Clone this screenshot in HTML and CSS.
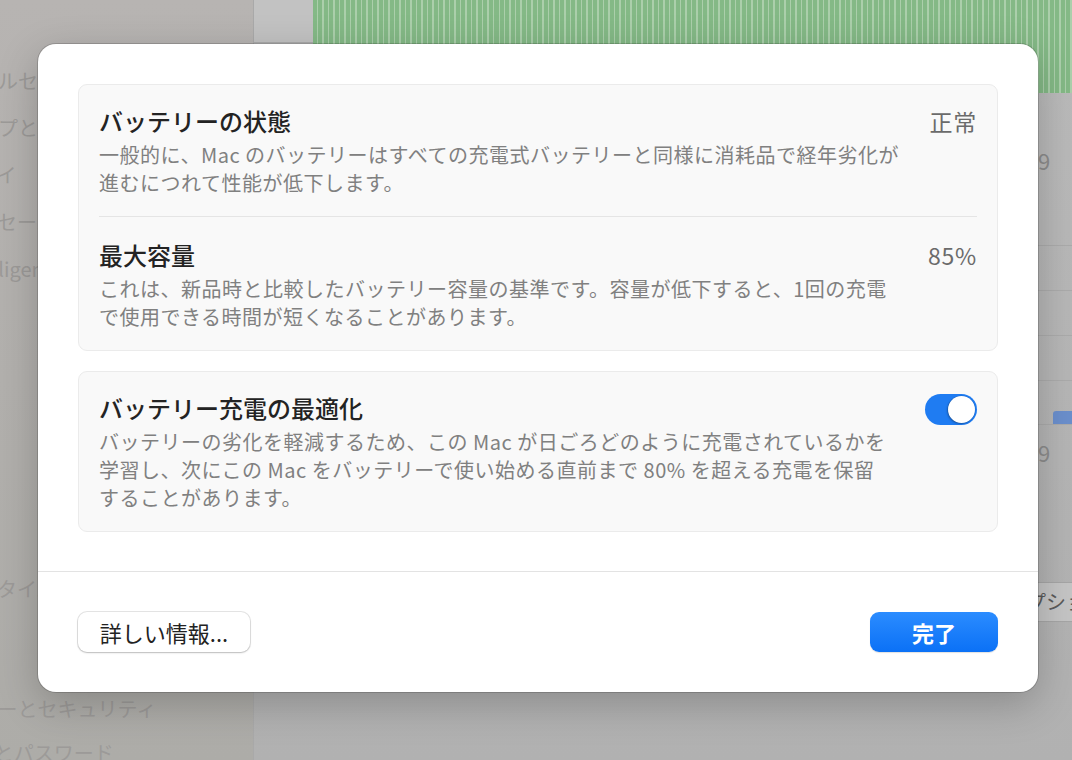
FILE: index.html
```html
<!DOCTYPE html>
<html lang="ja">

<head>
    <meta charset="UTF-8">
    <meta name="viewport" content="width=device-width, initial-scale=1.0">
    <title>バッテリーの状態</title>
    <link rel="stylesheet" href="styles.css">
</head>

<body>
    <div class="screen">
        <!-- 左のサイドバー（シートの後ろ） -->
        <aside class="sidebar">
            <ul class="side-group side-group-first">
                <li>コントロールセンター</li>
                <li>デスクトップとDock</li>
                <li>ディスプレイ</li>
                <li>スクリーンセーバ</li>
                <li>Apple Intelligence と Siri</li>
            </ul>
            <ul class="side-group">
                <li>壁紙</li>
                <li>通知</li>
                <li>サウンド</li>
                <li>集中モード</li>
                <li>キーボード</li>
                <li>スクリーンタイム</li>
            </ul>
            <ul class="side-group side-group-last">
                <li>ロック画面</li>
                <li>プライバシーとセキュリティ</li>
                <li class="side-touch">Touch ID とパスワード</li>
            </ul>
        </aside>

        <main class="pane">
            <div class="pane-top">
                <div class="axis"></div>
                <div class="chart"></div>
            </div>
            <div class="pane-body">
                <div class="stat">9</div>
                <div class="pane-row"></div>
                <div class="pane-row"></div>
                <div class="pane-row"></div>
                <div class="pane-row pane-row-bar">
                    <div class="bar"></div>
                </div>
                <div class="stat stat-second">9</div>
                <div class="pane-button">オプション...</div>
            </div>
        </main>
    </div>

    <!-- バッテリーの状態シート -->
    <div class="sheet">
        <div class="sheet-body">
            <div class="card">
                <div class="row">
                    <div class="row-text">
                        <div class="row-title">バッテリーの状態</div>
                        <div class="row-desc">一般的に、Mac のバッテリーはすべての充電式バッテリーと同様に消耗品で経年劣化が<br>進むにつれて性能が低下します。</div>
                    </div>
                    <div class="row-value">正常</div>
                </div>
                <div class="row">
                    <div class="row-text">
                        <div class="row-title">最大容量</div>
                        <div class="row-desc">これは、新品時と比較したバッテリー容量の基準です。容量が低下すると、1回の充電<br>で使用できる時間が短くなることがあります。</div>
                    </div>
                    <div class="row-value">85%</div>
                </div>
            </div>

            <div class="card">
                <div class="row">
                    <div class="row-text">
                        <div class="row-title">バッテリー充電の最適化</div>
                        <div class="row-desc">バッテリーの劣化を軽減するため、この Mac が日ごろどのように充電されているかを<br>学習し、次にこの Mac をバッテリーで使い始める直前まで 80% を超える充電を保留<br>することがあります。</div>
                    </div>
                    <div class="toggle"><span class="toggle-knob"></span></div>
                </div>
            </div>
        </div>

        <div class="sheet-foot">
            <a href="javascript:;" class="btn btn-plain">詳しい情報...</a>
            <a href="javascript:;" class="btn btn-primary">完了</a>
        </div>
    </div>
</body>

</html>
```

FILE: styles.css
```css
* {
    box-sizing: border-box;
}

html,
body,
ul,
li,
div,
a {
    margin: 0;
    padding: 0;
}

body {
    width: 1072px;
    height: 760px;
    overflow: hidden;
    font-family: "Noto Sans CJK JP", "Noto Sans", sans-serif;
}

a {
    text-decoration: none;
}

ul {
    list-style: none;
}

/* 背景（暗くなった設定ウインドウ） */
.screen {
    display: flex;
    height: 760px;
}

.sidebar {
    width: 254px;
    flex: none;
    overflow: hidden;
    background: linear-gradient(#b7b4b2, #adaca8);
    border-right: 1px solid #a9a9a9;
}

.side-group {
    margin-left: -102px;
    margin-top: 37.5px;
}

.side-group-first {
    margin-top: 57px;
}

.side-group-last {
    margin-top: 26px;
}

.side-group li {
    height: 47px;
    line-height: 47px;
    font-size: 20px;
    color: #9c9a98;
    white-space: nowrap;
}

.side-group li.side-touch {
    padding-left: 10px;
    line-height: 41px;
}

.pane {
    flex: 1;
    overflow: hidden;
    background: linear-gradient(#bbbbbb, #b1b1b1);
}

.pane-top {
    display: flex;
    height: 93px;
}

.axis {
    width: 59px;
    height: 43px;
    background: #c2c2c2;
    border-bottom: 1px solid #aaaaaa;
}

.chart {
    flex: 1;
    background: repeating-linear-gradient(90deg, #84b986 0 4px, #abcfab 4px 5.5px);
}

.pane-body {
    padding-left: 784px;
}

.stat {
    height: 152px;
    padding-top: 52px;
    font-size: 22px;
    line-height: 30px;
    color: #8c8c8c;
}

.stat-second {
    height: 150px;
    padding-top: 12px;
}

.pane-row {
    height: 45px;
    border-top: 1px solid #ababab;
}

.pane-row-bar {
    display: flex;
    align-items: flex-end;
    border-bottom: 1px solid #ababab;
}

.bar {
    width: 100%;
    height: 13px;
    margin-left: 15px;
    background: #6b8fcc;
    border-radius: 3px 0 0 0;
}

.pane-button {
    width: 120px;
    height: 40px;
    margin-left: -53px;
    margin-top: 7px;
    padding-left: 20px;
    line-height: 38px;
    font-size: 20px;
    color: #5a5a5a;
    white-space: nowrap;
    background: #c5c5c5;
    border: 1px solid #a6a6a6;
}

/* シート */
.sheet {
    position: absolute;
    left: 38px;
    top: 44px;
    width: 1000px;
    height: 648px;
    display: flex;
    flex-direction: column;
    background-color: #fff;
    border-radius: 18px;
    box-shadow: 0 0 0 1px rgba(0, 0, 0, .16), 0 12px 40px rgba(0, 0, 0, .22);
}

.sheet-body {
    flex: 1;
    display: flex;
    flex-direction: column;
    gap: 20px;
    padding: 40px 40px 0;
}

.card {
    padding: 0 20px;
    background-color: #f9f9f9;
    border: 1px solid #ebebeb;
    border-radius: 9px;
}

.row {
    display: flex;
    align-items: flex-start;
    gap: 24px;
    padding: 21px 0 19px;
}

.row+.row {
    padding-top: 23px;
    border-top: 1px solid #e5e5e5;
}

.row-text {
    flex: 1;
    min-width: 0;
}

.row-title {
    margin-bottom: 5px;
    font-size: 24px;
    line-height: 30px;
    font-weight: 500;
    color: #232323;
}

.row-desc {
    font-size: 20px;
    line-height: 28px;
    letter-spacing: .5px;
    color: #808080;
    white-space: nowrap;
}

.row-value {
    font-size: 23px;
    line-height: 30px;
    letter-spacing: .8px;
    color: #6b6b6b;
}

.toggle {
    display: flex;
    justify-content: flex-end;
    flex: none;
    width: 52px;
    height: 31px;
    margin-top: 1px;
    padding: 2px;
    border-radius: 16px;
    background-color: #1f7cf2;
}

.toggle-knob {
    width: 27px;
    height: 27px;
    border-radius: 50%;
    background-color: #fff;
    box-shadow: 0 0 0 .5px rgba(0, 0, 0, .12), -1px 1px 2px rgba(0, 0, 0, .25);
}

.sheet-foot {
    display: flex;
    align-items: center;
    justify-content: space-between;
    height: 121px;
    padding: 0 40px;
    border-top: 1px solid #e3e3e3;
}

.btn {
    display: block;
    height: 40px;
    line-height: 40px;
    border-radius: 9px;
    font-size: 22px;
    text-align: center;
}

.btn-plain {
    width: 172px;
    color: #222;
    background-color: #fff;
    box-shadow: 0 0 0 1px rgba(0, 0, 0, .1), 0 1px 2px rgba(0, 0, 0, .18);
}

.btn-primary {
    width: 128px;
    color: #fff;
    font-weight: 700;
    background: linear-gradient(#2b8cff, #0b71f6);
    box-shadow: 0 1px 1px rgba(0, 0, 0, .12);
}
```
